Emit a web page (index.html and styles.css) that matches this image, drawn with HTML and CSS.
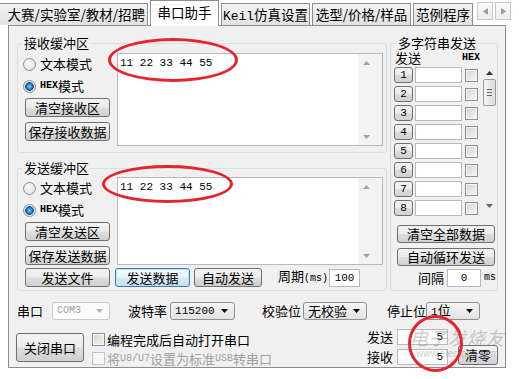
FILE: index.html
```html
<!DOCTYPE html>
<html lang="zh-CN">
<head>
  <meta charset="UTF-8" />
  <title>串口助手</title>
  <link rel="stylesheet" href="styles.css">
</head>
<body>

<div class="tabs">
  <div class="tab first">大赛/实验室/教材/招聘</div>
  <div class="tab active">串口助手</div>
  <div class="tab keil"><span class="mono">Keil</span>仿真设置</div>
  <div class="tab sel">选型/价格/样品</div>
  <div class="tab demo">范例程序</div>
  <div class="tab-nav">
    <span class="nav-btn"><svg width="5" height="7" viewBox="0 0 5 7"><polygon points="5,0 5,7 0,3.5" fill="#8aa0b8"/></svg></span>
    <span class="nav-btn"><svg width="5" height="7" viewBox="0 0 5 7"><polygon points="0,0 0,7 5,3.5" fill="#8aa0b8"/></svg></span>
  </div>
</div>

<div class="panel">
  <div class="top-row">
    <div class="left-col">
      <fieldset class="group recv">
        <legend>接收缓冲区</legend>
        <div class="buf">
          <div class="buf-ctrls">
            <label class="radio"><span class="rb"></span>文本模式</label>
            <label class="radio"><span class="rb on"></span><span class="hex">HEX</span>模式</label>
            <button class="btn first-btn">清空接收区</button>
            <button class="btn">保存接收数据</button>
          </div>
          <div class="memo">
            <div class="memo-text">11 22 33 44 55</div>
            <div class="vscroll">
              <span class="sarrow"><svg width="7" height="4" viewBox="0 0 7 4"><polygon points="0,4 7,4 3.5,0" fill="#a3a3a3"/></svg></span>
              <span class="sarrow"><svg width="7" height="4" viewBox="0 0 7 4"><polygon points="0,0 7,0 3.5,4" fill="#a3a3a3"/></svg></span>
            </div>
          </div>
        </div>
      </fieldset>

      <fieldset class="group send">
        <legend>发送缓冲区</legend>
        <div class="buf">
          <div class="buf-ctrls">
            <label class="radio"><span class="rb"></span>文本模式</label>
            <label class="radio"><span class="rb on"></span><span class="hex">HEX</span>模式</label>
            <button class="btn first-btn">清空发送区</button>
            <button class="btn">保存发送数据</button>
          </div>
          <div class="memo">
            <div class="memo-text">11 22 33 44 55</div>
            <div class="vscroll">
              <span class="sarrow"><svg width="7" height="4" viewBox="0 0 7 4"><polygon points="0,4 7,4 3.5,0" fill="#a3a3a3"/></svg></span>
              <span class="sarrow"><svg width="7" height="4" viewBox="0 0 7 4"><polygon points="0,0 7,0 3.5,4" fill="#a3a3a3"/></svg></span>
            </div>
          </div>
        </div>
        <div class="send-row">
          <button class="btn file-btn">发送文件</button>
          <button class="btn default-btn">发送数据</button>
          <button class="btn auto-btn">自动发送</button>
          <span class="period">周期<span class="mono small">(ms)</span></span>
          <span class="edit period-edit mono">100</span>
        </div>
      </fieldset>
    </div>

    <fieldset class="group multi">
      <legend>多字符串发送</legend>
      <div class="multi-head"><span>发送</span><span class="hex">HEX</span></div>
      <div class="multi-body">
        <div class="multi-list">
          <div class="mrow"><button class="num">1</button><span class="edit"></span><span class="cb"></span></div>
          <div class="mrow"><button class="num">2</button><span class="edit"></span><span class="cb"></span></div>
          <div class="mrow"><button class="num">3</button><span class="edit"></span><span class="cb"></span></div>
          <div class="mrow"><button class="num">4</button><span class="edit"></span><span class="cb"></span></div>
          <div class="mrow"><button class="num">5</button><span class="edit"></span><span class="cb"></span></div>
          <div class="mrow"><button class="num">6</button><span class="edit"></span><span class="cb"></span></div>
          <div class="mrow"><button class="num">7</button><span class="edit"></span><span class="cb"></span></div>
          <div class="mrow"><button class="num">8</button><span class="edit"></span><span class="cb"></span></div>
        </div>
        <div class="mscroll">
          <svg width="7" height="4" viewBox="0 0 7 4"><polygon points="0,4 7,4 3.5,0" fill="#333"/></svg>
          <span class="thumb"><span></span><span></span><span></span></span>
          <span class="fill"></span>
          <svg width="7" height="4" viewBox="0 0 7 4"><polygon points="0,0 7,0 3.5,4" fill="#666"/></svg>
        </div>
      </div>
      <button class="btn wide clear-all">清空全部数据</button>
      <button class="btn wide">自动循环发送</button>
      <div class="interval">间隔<span class="edit int-edit mono">0</span><span class="mono unit">ms</span></div>
    </fieldset>
  </div>

  <div class="port-row">
    <div class="fld port">
      <span class="lbl">串口</span>
      <span class="combo disabled com"><span class="mono">COM3</span><svg width="7" height="4" viewBox="0 0 7 4"><polygon points="0,0 7,0 3.5,4" fill="#b5b5b5"/></svg></span>
    </div>
    <div class="fld baud">
      <span class="lbl">波特率</span>
      <span class="combo rate"><span class="mono">115200</span><svg width="7" height="4" viewBox="0 0 7 4"><polygon points="0,0 7,0 3.5,4" fill="#000"/></svg></span>
    </div>
    <div class="fld parity">
      <span class="lbl">校验位</span>
      <span class="combo par"><span>无校验</span><svg width="7" height="4" viewBox="0 0 7 4"><polygon points="0,0 7,0 3.5,4" fill="#000"/></svg></span>
    </div>
    <div class="fld stop">
      <span class="lbl">停止位</span>
      <span class="combo stopc"><span><span class="mono">1</span>位</span><svg width="7" height="4" viewBox="0 0 7 4"><polygon points="0,0 7,0 3.5,4" fill="#000"/></svg></span>
    </div>
  </div>

  <div class="action-row">
    <button class="btn close-btn">关闭串口</button>
    <div class="checks">
      <label class="check"><span class="cb"></span>编程完成后自动打开串口</label>
      <label class="check disabled"><span class="cb"></span>将<span class="mono small">U8/U7</span>设置为标准<span class="mono small">USB</span>转串口</label>
    </div>
    <div class="counters">
      <span class="lbl">发送</span><span class="edit count mono">5</span>
      <span class="lbl">接收</span><span class="edit count mono">5</span>
    </div>
    <button class="btn zero-btn">清零</button>
  </div>
</div>

<div class="watermark">
  <span class="wm-name">电子发烧友</span>
  <span class="wm-url">www.elecfans.com</span>
</div>

<span class="mark mark-recv"></span>
<span class="mark mark-send"></span>
<span class="mark mark-count"></span>

</body>
</html>
```

FILE: styles.css
```css
* {
  box-sizing: border-box;
}

body {
  margin: 0;
  width: 519px;
  height: 379px;
  overflow: hidden;
  position: relative;
  background: #fff;
  font-family: "Noto Sans CJK SC", sans-serif;
  font-size: 13px;
  line-height: 14px;
  color: #000;
}

.mono {
  font-family: "Liberation Mono", monospace;
  font-size: 11px;
}

.mono.small {
  font-size: 10px;
}

/* tab strip */
.tabs {
  display: flex;
  align-items: flex-end;
  height: 25px;
  position: relative;
  z-index: 1;
}

.tab {
  height: 22px;
  margin-right: 2px;
  border: 1px solid #8d8d8d;
  border-bottom: none;
  background: linear-gradient(#f4f4f4, #e1e1e1);
  font-size: 13.5px;
  line-height: 20px;
  text-align: center;
  white-space: nowrap;
  overflow: hidden;
}

.tab.first {
  width: 148px;
  border-left: none;
  text-align: right;
  padding-right: 2px;
}

.tab.active {
  width: 69px;
  height: 26px;
  margin-bottom: -1px;
  background: #fff;
  line-height: 23px;
}

.tab.keil { width: 89px; }
.tab.keil .mono { font-size: 13px; }
.tab.sel { width: 99px; }
.tab.demo { width: 60px; }

.tab-nav {
  display: flex;
  gap: 2px;
  margin-left: 2px;
  align-self: flex-start;
  margin-top: 2px;
}

.nav-btn {
  width: 16px;
  height: 18px;
  border: 1px solid #c9c9c9;
  background: linear-gradient(#fbfbfb, #ececec);
  display: flex;
  align-items: center;
  justify-content: center;
}

/* main panel */
.panel {
  margin-left: 8px;
  width: 498px;
  height: 343px;
  border: 1px solid #8d8d8d;
  background: #f0f0f0;
  padding: 10px 7px 0 8px;
}

.top-row {
  display: flex;
  gap: 3px;
}

.left-col {
  width: 370px;
  display: flex;
  flex-direction: column;
  gap: 8px;
}

.group {
  margin: 0;
  min-width: 0;
  border: 1px solid #d5dfe5;
  border-radius: 3px;
  padding: 3px 3px 6px 7px;
}

.group legend {
  padding: 0 2px;
  margin-left: -3px;
  line-height: 14px;
}

.group.send {
  padding-top: 2px;
  padding-bottom: 3px;
}

.buf {
  display: flex;
}

.buf-ctrls {
  width: 85px;
  margin-right: 7px;
  display: flex;
  flex-direction: column;
}

.radio {
  height: 22px;
  display: flex;
  align-items: center;
  margin-left: -2px;
}

.rb {
  width: 13px;
  height: 13px;
  margin-right: 4px;
  border: 1px solid #8e8f8f;
  border-radius: 50%;
  background: radial-gradient(circle at 40% 40%, #fdfdfd, #d6d6d6);
}

.rb.on {
  background: radial-gradient(circle, #8fd0f5 0, #2a7fc4 2.5px, #0f4f8f 4px, #e9e9e9 4.6px, #d6d6d6 100%);
}

.hex {
  font-family: "Liberation Mono", monospace;
  font-weight: bold;
  font-size: 10px;
}

.btn {
  display: block;
  height: 19px;
  padding: 0;
  border: 1px solid #707070;
  border-radius: 3px;
  background: linear-gradient(#f3f3f3 0%, #ebebeb 48%, #dddddd 52%, #d0d0d0 100%);
  font-family: "Noto Sans CJK SC", sans-serif;
  font-size: 13px;
  line-height: 16px;
  color: #000;
  text-align: center;
}

.buf-ctrls .btn {
  width: 85px;
  margin-top: 5px;
}

.buf-ctrls .first-btn {
  margin-top: 1px;
}

.memo {
  flex: 1;
  height: 93px;
  display: flex;
  border: 1px solid #b5bac0;
  background: #fff;
}

.send .memo {
  height: 88px;
}

.memo-text {
  flex: 1;
  padding: 3px 2px;
  font-family: "Liberation Mono", monospace;
  font-size: 11px;
  line-height: 13px;
  white-space: pre;
}

.vscroll {
  width: 24px;
  padding-right: 7px;
  background: #f3f3f3;
  display: flex;
  flex-direction: column;
  justify-content: space-between;
}

.sarrow {
  height: 17px;
  display: flex;
  align-items: center;
  justify-content: center;
}

.send-row {
  display: flex;
  align-items: center;
  margin-top: 3px;
  height: 19px;
}

.file-btn { width: 85px; }

.default-btn {
  width: 75px;
  margin-left: 5px;
  border-color: #3c7fb1;
  background: linear-gradient(#f6fbfe 0%, #e6f2fa 48%, #d5e8f5 52%, #c6e0f2 100%);
  box-shadow: inset 0 0 0 1px #c3e1f5;
}

.auto-btn {
  width: 68px;
  margin-left: 4px;
}

.period {
  margin-left: 16px;
}

.edit {
  display: block;
  height: 16px;
  border: 1px solid #b5bac0;
  background: #fff;
}

.period-edit {
  width: 31px;
  height: 18px;
  margin-left: 1px;
  line-height: 16px;
  text-align: center;
}

/* multi string send */
.multi {
  width: 108px;
  padding: 0 0 3px 3px;
}

.multi legend {
  margin-left: 2px;
}

.multi-head {
  width: 86px;
  height: 16px;
  margin-bottom: 1px;
  padding-left: 1px;
  display: flex;
  justify-content: space-between;
  align-items: center;
}

.multi-body {
  display: flex;
}

.mrow {
  display: flex;
  align-items: center;
  height: 16px;
  margin-bottom: 3px;
}

.mrow:last-child {
  margin-bottom: 0;
}

.num {
  width: 19px;
  height: 16px;
  padding: 0;
  border: 1px solid #707070;
  border-radius: 3px;
  background: linear-gradient(#f3f3f3 0%, #ebebeb 48%, #dddddd 52%, #d0d0d0 100%);
  font-family: "Liberation Mono", monospace;
  font-size: 11px;
  line-height: 13px;
  color: #000;
}

.mrow .edit {
  width: 47px;
  margin-left: 2px;
}

.cb {
  display: block;
  width: 13px;
  height: 13px;
  border: 1px solid #8e8f8f;
  background: linear-gradient(135deg, #d4d4d4, #f7f7f7);
  box-shadow: inset 0 0 0 1px #f4f4f4;
}

.mrow .cb {
  margin-left: 3px;
}

.mscroll {
  width: 15px;
  margin-left: 4px;
  display: flex;
  flex-direction: column;
  align-items: center;
  padding: 4px 0 8px;
}

.thumb {
  width: 13px;
  height: 27px;
  margin-top: 4px;
  border: 1px solid #9a9a9a;
  border-radius: 2px;
  background: linear-gradient(90deg, #f4f4f4, #dcdcdc);
  display: flex;
  flex-direction: column;
  justify-content: center;
  align-items: center;
  gap: 2px;
}

.thumb span {
  width: 5px;
  height: 1px;
  background: #666;
}

.mscroll .fill {
  flex: 1;
}

.wide {
  width: 98px;
  height: 18px;
  margin-left: 3px;
  margin-top: 5px;
}

.wide.clear-all {
  margin-top: 9px;
}

.interval {
  margin-top: 3px;
  height: 18px;
  display: flex;
  align-items: center;
  justify-content: flex-end;
  padding-right: 1px;
}

.int-edit {
  width: 34px;
  height: 18px;
  margin-left: 3px;
  line-height: 16px;
  text-align: center;
}

.unit {
  margin-left: 3px;
  font-size: 10px;
}

/* serial settings */
.port-row {
  display: flex;
  align-items: center;
  height: 18px;
  margin-top: 11px;
}

.fld {
  display: flex;
  align-items: center;
}

.port { gap: 9px; }
.baud { gap: 3px; margin-left: 18px; }
.parity { gap: 2px; margin-left: 27px; }
.stop { margin-left: 20px; }

.combo {
  height: 18px;
  display: flex;
  align-items: center;
  justify-content: space-between;
  padding: 0 6px 0 4px;
  border: 1px solid #8e8f8f;
  border-radius: 3px;
  background: linear-gradient(#f5f5f5, #e2e2e2);
}

.combo.disabled {
  border-color: #c9c9c9;
  background: #fbfbfb;
  color: #a0a0a0;
}

.com { width: 58px; }
.com .mono { font-size: 10px; }
.rate { width: 65px; }
.par { width: 64px; }
.stopc { width: 54px; }

.action-row {
  display: flex;
  align-items: flex-start;
  margin-top: 8px;
}

.close-btn {
  width: 68px;
  height: 29px;
  margin-left: -1px;
  margin-top: 5px;
}

.checks {
  margin-left: 8px;
  margin-top: 5px;
  display: flex;
  flex-direction: column;
  gap: 6px;
}

.check {
  display: flex;
  align-items: center;
  height: 13px;
}

.check .cb {
  margin-right: 2px;
}

.check.disabled {
  color: #a0a0a0;
}

.check.disabled .cb {
  border-color: #c4c4c4;
  background: #f6f6f6;
}

.counters {
  margin-left: auto;
  margin-top: 1px;
  display: grid;
  grid-template-columns: 26px 51px;
  column-gap: 4px;
  row-gap: 4px;
  align-items: center;
}

.count {
  height: 16px;
  text-align: right;
  padding-right: 4px;
  line-height: 14px;
}

.counters .count:first-of-type {
  border-color: #a9c4dc;
}

.zero-btn {
  width: 40px;
  height: 20px;
  margin-left: 10px;
  margin-top: 17px;
}

/* picture overlays */
.watermark {
  position: absolute;
  left: 410px;
  top: 326px;
  display: flex;
  flex-direction: column;
  color: rgba(140, 140, 140, 0.45);
  pointer-events: none;
}

.wm-name {
  font-size: 18px;
  line-height: 22px;
  font-style: italic;
  letter-spacing: 1px;
}

.wm-url {
  font-family: "Liberation Sans", sans-serif;
  font-size: 10px;
  line-height: 12px;
  margin-left: 6px;
}

.mark {
  position: absolute;
  border: 3px solid #e4262c;
  border-radius: 50%;
}

.mark-recv {
  left: 108px;
  top: 38px;
  width: 130px;
  height: 44px;
}

.mark-send {
  left: 102px;
  top: 165px;
  width: 131px;
  height: 38px;
}

.mark-count {
  left: 408px;
  top: 315px;
  width: 55px;
  height: 57px;
}
```
